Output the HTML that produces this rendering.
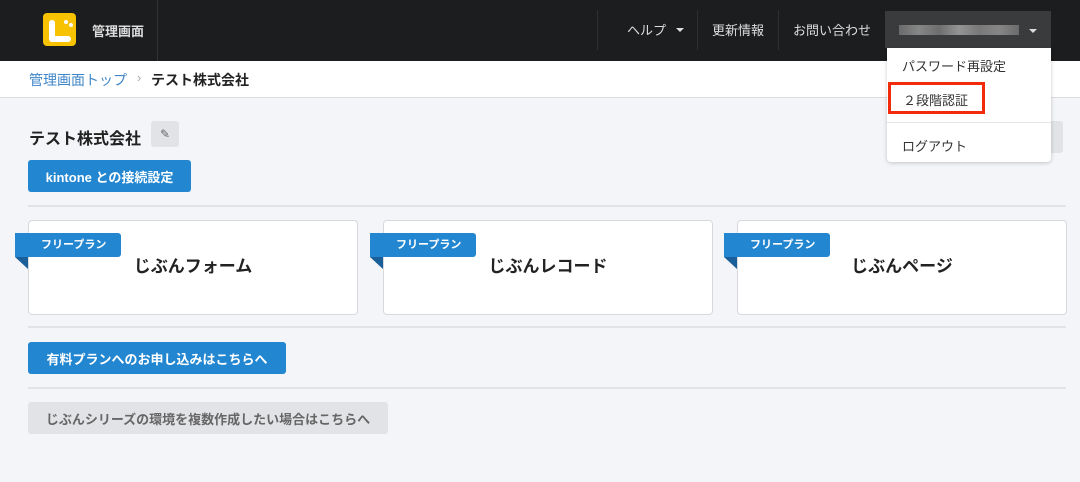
<!DOCTYPE html>
<html><head><meta charset="utf-8"><style>
*{box-sizing:border-box;margin:0;padding:0}
body{width:1080px;height:482px;overflow:hidden;background:#f4f5f9;font-family:"Liberation Sans","Noto Sans CJK JP",sans-serif;position:relative;color:#222}
.abs{position:absolute}
.hdr{left:0;top:0;width:1080px;height:61px;background:#1c1d1f}
.t{white-space:nowrap}
.btn{background:#2286d1;color:#fff;font-weight:bold;font-size:13px;border-radius:3px;display:flex;align-items:center;justify-content:center}
.card{background:#fff;border:1px solid #d8d9dc;border-radius:4px;height:95px;width:330px;top:220px}
.card .ti{position:absolute;left:0;right:0;top:31px;text-align:center;font-weight:bold;font-size:17px}
.rib{position:absolute;left:-14px;top:12px;width:106px;height:24px;background:#2286d1;color:#fff;font-size:11px;font-weight:bold;border-radius:0 3px 3px 0;padding-left:26px;line-height:24px}
.fold{position:absolute;left:-14px;top:36px;width:0;height:0;border-left:13px solid transparent;border-top:12px solid #1a5f99}
.hr{left:28px;width:1038px;height:2px;background:#e2e3e6}
</style></head><body>
<div class="abs hdr"></div>
<div class="abs" style="left:43px;top:13px;width:33px;height:33px;background:#f7c200;border-radius:4px"></div>
<div class="abs" style="left:49px;top:20px;width:6px;height:22px;background:#fff;border-radius:3px"></div>
<div class="abs" style="left:49px;top:36px;width:22px;height:6px;background:#fff;border-radius:3px"></div>
<div class="abs" style="left:64px;top:20px;width:4px;height:4px;background:#fff;border-radius:2px"></div>
<div class="abs" style="left:69px;top:23px;width:4px;height:4px;background:#fff;border-radius:2px"></div>
<div class="abs t" style="left:92px;top:21px;color:#ddd;font-size:13px;font-weight:bold">管理画面</div>
<div class="abs" style="left:157px;top:0;width:1px;height:61px;background:#333"></div>
<div class="abs" style="left:597px;top:10px;width:1px;height:40px;background:#2e2f31"></div>
<div class="abs t" style="left:627px;top:20px;color:#ddd;font-size:13px">ヘルプ</div>
<div class="abs" style="left:676px;top:28px;border-left:4px solid transparent;border-right:4px solid transparent;border-top:4px solid #ddd"></div>
<div class="abs" style="left:697px;top:10px;width:1px;height:40px;background:#2e2f31"></div>
<div class="abs t" style="left:712px;top:20px;color:#ddd;font-size:13px">更新情報</div>
<div class="abs" style="left:778px;top:10px;width:1px;height:40px;background:#2e2f31"></div>
<div class="abs t" style="left:793px;top:20px;color:#ddd;font-size:13px">お問い合わせ</div>
<div class="abs" style="left:885px;top:11px;width:166px;height:37px;background:#3a3b3d"></div>
<div class="abs" style="left:899px;top:25px;width:120px;height:10px;background:linear-gradient(90deg,#777,#999,#7a7a7a,#aaa,#888,#999,#777);opacity:.8"></div>
<div class="abs" style="left:1029px;top:29px;border-left:4px solid transparent;border-right:4px solid transparent;border-top:4px solid #ddd"></div>
<div class="abs" style="left:0;top:61px;width:1080px;height:37px;background:#fff;border-bottom:1px solid #ddd"></div>
<div class="abs t" style="left:29px;top:70px;font-size:14px;color:#3f86c8">管理画面トップ</div>
<div class="abs t" style="left:137px;top:70px;font-size:13px;color:#aaa">›</div>
<div class="abs t" style="left:151px;top:70px;font-size:14px;font-weight:bold">テスト株式会社</div>
<div class="abs t" style="left:29px;top:125px;font-size:16px;font-weight:bold">テスト株式会社</div>
<div class="abs" style="left:151px;top:121px;width:28px;height:26px;background:#e2e3e6;border-radius:3px;color:#666;font-size:12px;text-align:center;line-height:26px">✎</div>
<div class="abs btn" style="left:28px;top:160px;width:163px;height:32px">kintone との接続設定</div>
<div class="abs hr" style="top:205px"></div>
<div class="abs card" style="left:28px"><div class="rib">フリープラン</div><div class="fold"></div><div class="ti">じぶんフォーム</div></div>
<div class="abs card" style="left:383px"><div class="rib">フリープラン</div><div class="fold"></div><div class="ti">じぶんレコード</div></div>
<div class="abs card" style="left:737px"><div class="rib">フリープラン</div><div class="fold"></div><div class="ti">じぶんページ</div></div>
<div class="abs hr" style="top:326px"></div>
<div class="abs btn" style="left:28px;top:342px;width:258px;height:32px">有料プランへのお申し込みはこちらへ</div>
<div class="abs hr" style="top:387px"></div>
<div class="abs btn" style="left:28px;top:402px;width:360px;height:32px;background:#e2e3e6;color:#666">じぶんシリーズの環境を複数作成したい場合はこちらへ</div>
<div class="abs" style="left:1030px;top:121px;width:33px;height:32px;background:#e2e3e6;border-radius:3px"></div>
<div class="abs" style="left:887px;top:48px;width:164px;height:114px;background:#fff;border-radius:0 0 4px 4px;box-shadow:0 1px 4px rgba(0,0,0,.2)"></div>
<div class="abs t" style="left:902px;top:56px;font-size:13px;color:#333">パスワード再設定</div>
<div class="abs" style="left:888px;top:82px;width:97px;height:32px;border:3px solid #f22c0b"></div>
<div class="abs t" style="left:903px;top:90px;font-size:13px;color:#333">２段階認証</div>
<div class="abs" style="left:887px;top:122px;width:164px;height:1px;background:#e5e5e5"></div>
<div class="abs t" style="left:902px;top:136px;font-size:13px;color:#333">ログアウト</div>
</body></html>
